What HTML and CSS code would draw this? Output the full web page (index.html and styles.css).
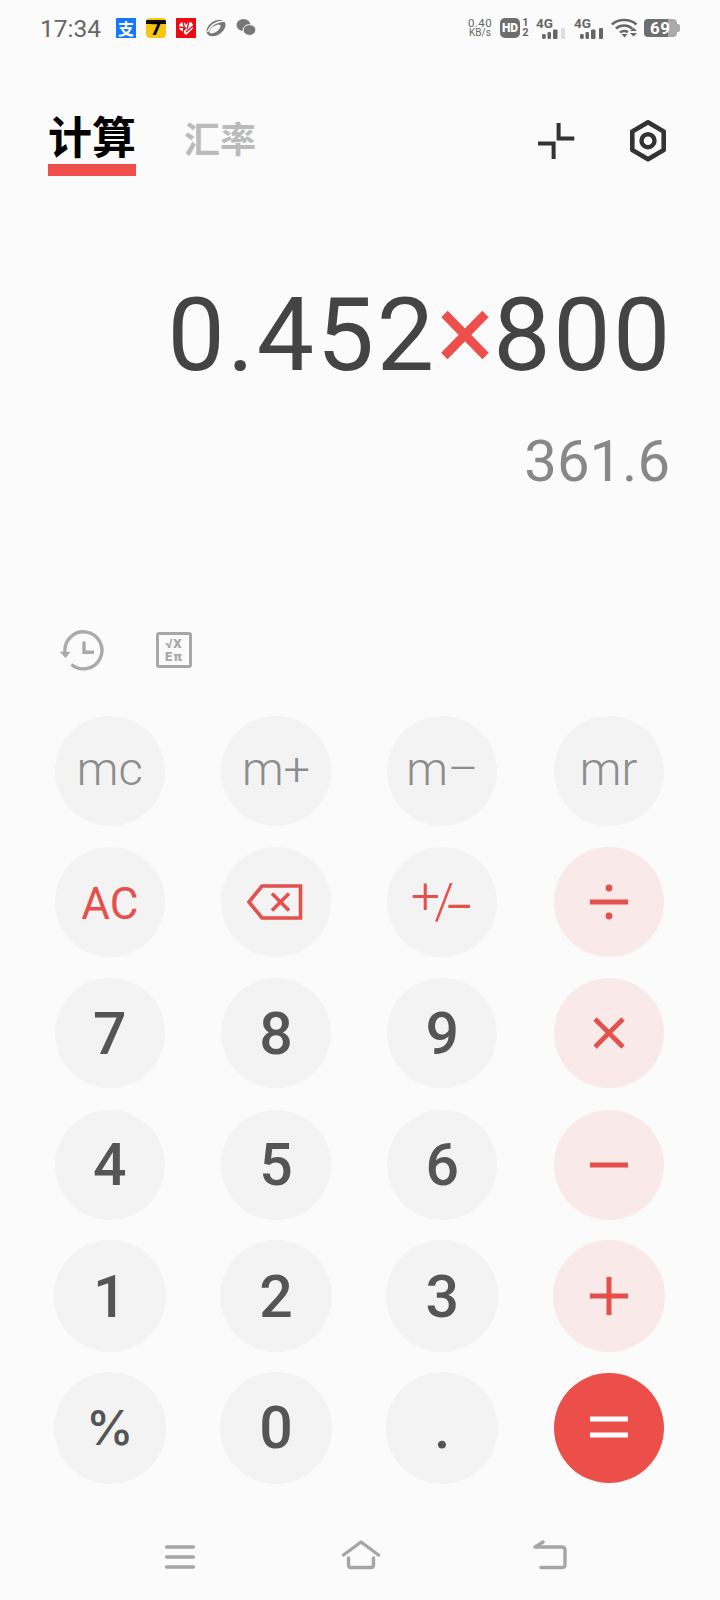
FILE: index.html
```html
<!DOCTYPE html>
<html lang="zh">
<head>
    <meta charset="utf-8">
    <title>计算器</title>
    <link rel="stylesheet" href="styles.css">
</head>
<body>
    <div id="phone">
        <div class="status-bar">
            <span class="time">17:34</span>
            <div class="notify-icons">
                <span class="app app-alipay">支</span>
                <span class="app app-seven">7</span>
                <svg class="app" viewBox="0 0 20 20">
                    <rect width="20" height="20" fill="#ee0a12"/>
                    <path d="M10 17 L3.5 11 C1.5 6 6 2.5 9 5 L10 7 L12 4.5 C15 2.5 18.5 6 16.5 11 Z" fill="#fff"/>
                    <path d="M7 4 L9 12 M13 4 L11 11 M3 9 L10 10 M17 8 L10 14 M8 10 L7 15" stroke="#ee0a12" stroke-width="1.3"/>
                </svg>
                <svg class="app" viewBox="0 0 20 20">
                    <ellipse cx="10" cy="10" rx="10.5" ry="7" transform="rotate(-35 10 10)" fill="#777"/>
                    <path d="M1.5 14 C5 6 11 3.5 18 3" stroke="#fbfbfb" stroke-width="1.6" fill="none"/>
                    <ellipse cx="9" cy="11" rx="6.5" ry="3" transform="rotate(-35 9 11)" fill="#fbfbfb"/>
                </svg>
                <svg class="app" viewBox="0 0 20 20">
                    <ellipse cx="7.5" cy="7" rx="7" ry="6" fill="#777"/>
                    <ellipse cx="13.5" cy="12" rx="6.4" ry="5.4" fill="#777" stroke="#fbfbfb" stroke-width="1"/>
                </svg>
            </div>
            <div class="sys-icons">
                <div class="speed"><span>0.40</span><span class="speed-unit">KB/s</span></div>
                <span class="hd">HD</span>
                <div class="sim-nums"><span>1</span><span>2</span></div>
                <div class="net">
                    <span class="net-label">4G</span>
                    <svg class="bars" viewBox="0 0 24 11">
                        <rect x="0" y="6" width="3.8" height="5" rx="1.4" fill="#666"/>
                        <rect x="5.5" y="4" width="3.5" height="7" rx="1.2" fill="#666"/>
                        <rect x="11" y="1.5" width="4.5" height="9.5" rx="1" fill="#666"/>
                        <rect x="19" y="0" width="4" height="11" fill="#ddd"/>
                    </svg>
                </div>
                <div class="net">
                    <span class="net-label">4G</span>
                    <svg class="bars" viewBox="0 0 24 11">
                        <rect x="0" y="6" width="3.8" height="5" rx="1.4" fill="#666"/>
                        <rect x="5.5" y="4" width="3.5" height="7" rx="1.2" fill="#666"/>
                        <rect x="11" y="1.5" width="4.5" height="9.5" rx="1" fill="#666"/>
                        <rect x="19" y="0" width="4" height="11" rx="1" fill="#666"/>
                    </svg>
                </div>
                <svg class="wifi" viewBox="0 0 27 20" fill="none" stroke="#666" stroke-width="2.6">
                    <path d="M1 6.5 C7 0.5 19 0.5 25.5 6.5"/>
                    <path d="M5 10.5 C9 6.5 17 6.5 21 10.5"/>
                    <path d="M9 14.5 C11.5 12.5 14 12.5 17 14"/>
                    <path d="M10.5 16 H16.5 L13.5 19.5 Z" fill="#666" stroke="none"/>
                    <path d="M22.5 9.5 L26 13 H19 Z M19 15 H26 L22.5 18.5 Z" fill="#666" stroke="none"/>
                </svg>
                <div class="battery">
                    <span class="battery-level">69</span>
                    <span class="battery-nub"></span>
                </div>
            </div>
        </div>

        <div class="top-bar">
            <div class="tabs">
                <div class="tab tab-active">计算</div>
                <div class="tab">汇率</div>
            </div>
            <div class="top-actions">
                <svg class="collapse-icon" viewBox="0 0 38 38" fill="none" stroke="#333" stroke-width="4">
                    <path d="M21.6 1 V16.6 H37.3"/>
                    <path d="M1 21.4 H16.6 V37"/>
                </svg>
                <svg class="settings-icon" viewBox="0 0 40 44" fill="none" stroke="#333">
                    <path d="M19 4.3 L34.7 13.5 V32 L19 41.2 L3.3 32 V13.5 Z" stroke-width="4.6" stroke-linejoin="round"/>
                    <circle cx="19" cy="22.7" r="6.5" stroke-width="4.4"/>
                </svg>
            </div>
        </div>

        <div class="display">
            <div class="expression">0.452<span class="times">×</span>800</div>
            <div class="result">361.6</div>
        </div>

        <div class="tools">
            <svg class="history-icon" viewBox="0 0 46 44" fill="none" stroke="#aaa" stroke-width="3.4">
                <path d="M6 22 A18.5 18.5 0 1 1 12.5 34.5"/>
                <path d="M25 11.5 V22.3 H35"/>
                <path d="M0.5 21.7 H11.5 L6.6 28 Z" fill="#aaa" stroke="none"/>
            </svg>
            <div class="formula-icon">
                <span>√X</span>
                <span>Eπ</span>
            </div>
        </div>

        <div class="keypad">
            <div class="key"><span class="key-bg mem">mc</span></div>
            <div class="key"><span class="key-bg mem">m+</span></div>
            <div class="key"><span class="key-bg mem">m–</span></div>
            <div class="key"><span class="key-bg mem">mr</span></div>

            <div class="key"><span class="key-bg fn ac">AC</span></div>
            <div class="key"><span class="key-bg">
                <svg class="icon-back" viewBox="0 0 58 38" fill="none" stroke="#e4504b" stroke-width="3.6">
                    <path d="M53.5 3 H15 L2 19 L15 35 H53.5 Z"/>
                    <path d="M25 10.5 L42 27.5 M42 10.5 L25 27.5"/>
                </svg>
            </span></div>
            <div class="key"><span class="key-bg fn sign"><span class="sign-plus">+</span><span class="sign-slash">/</span><span class="sign-minus">–</span></span></div>
            <div class="key"><span class="key-bg op">
                <svg class="icon-op" viewBox="0 0 38 38" fill="#e4504b">
                    <circle cx="19" cy="5" r="3.4"/>
                    <rect x="0" y="16.5" width="38" height="5"/>
                    <circle cx="19" cy="33" r="3.4"/>
                </svg>
            </span></div>

            <div class="key"><span class="key-bg num">7</span></div>
            <div class="key"><span class="key-bg num">8</span></div>
            <div class="key"><span class="key-bg num">9</span></div>
            <div class="key"><span class="key-bg op">
                <svg class="icon-op" viewBox="0 0 38 38" stroke="#e4504b" stroke-width="4.6">
                    <path d="M5 5 L33 33 M33 5 L5 33"/>
                </svg>
            </span></div>

            <div class="key"><span class="key-bg num">4</span></div>
            <div class="key"><span class="key-bg num">5</span></div>
            <div class="key"><span class="key-bg num">6</span></div>
            <div class="key"><span class="key-bg op">
                <svg class="icon-op" viewBox="0 0 38 38" fill="#e4504b">
                    <rect x="0" y="16.5" width="38" height="5"/>
                </svg>
            </span></div>

            <div class="key"><span class="key-bg big num">1</span></div>
            <div class="key"><span class="key-bg big num">2</span></div>
            <div class="key"><span class="key-bg big num">3</span></div>
            <div class="key"><span class="key-bg big op">
                <svg class="icon-op" viewBox="0 0 38 38" fill="#e4504b">
                    <rect x="0" y="16.5" width="38" height="5"/>
                    <rect x="16.5" y="0" width="5" height="38"/>
                </svg>
            </span></div>

            <div class="key"><span class="key-bg big num percent">%</span></div>
            <div class="key"><span class="key-bg big num">0</span></div>
            <div class="key"><span class="key-bg big num">.</span></div>
            <div class="key"><span class="key-bg equals">
                <svg class="icon-op" viewBox="0 0 38 38" fill="#fff">
                    <rect x="0" y="7.5" width="38" height="5"/>
                    <rect x="0" y="23.5" width="38" height="5"/>
                </svg>
            </span></div>
        </div>

        <div class="nav-bar">
            <svg class="nav-menu" viewBox="0 0 32 24" fill="none" stroke="#a6a6a6" stroke-width="3.4" stroke-linecap="round">
                <path d="M2.5 2 H29.5 M2.5 12 H29.5 M2.5 22 H29.5"/>
            </svg>
            <svg class="nav-home" viewBox="0 0 40 30" fill="none" stroke="#a6a6a6" stroke-width="3.4" stroke-linecap="round" stroke-linejoin="round">
                <path d="M2.5 15 L20 2 L37.5 15"/>
                <path d="M7.5 18 V25 Q7.5 27.5 10 27.5 H30 Q32.5 27.5 32.5 25 V18"/>
            </svg>
            <svg class="nav-back" viewBox="0 0 34 30" fill="none" stroke="#a6a6a6" stroke-width="3.4" stroke-linecap="round" stroke-linejoin="round">
                <path d="M10 2 L2 7 H29 Q32 7 32 10 V25 Q32 27.5 29 27.5 H8"/>
            </svg>
        </div>
    </div>
</body>
</html>
```

FILE: styles.css
```css
* {
    box-sizing: border-box;
}
body {
    margin: 0;
    background-color: #fbfbfb;
    font-family: Roboto, "Noto Sans CJK SC", sans-serif;
}
#phone {
    width: 720px;
    height: 1600px;
    display: flex;
    flex-direction: column;
    overflow: hidden;
}

/* status bar */
.status-bar {
    height: 56px;
    padding: 0 40px;
    display: flex;
    align-items: center;
    color: #666;
}
.time {
    width: 76px;
    font-size: 24.5px;
}
.notify-icons {
    display: flex;
    gap: 10px;
}
.app {
    width: 20px;
    height: 20px;
    display: flex;
    align-items: center;
    justify-content: center;
    font-weight: 700;
    line-height: 1;
}
.app-alipay {
    background-color: #1677ff;
    color: #fff;
    font-size: 16px;
    font-family: "Noto Sans CJK SC", sans-serif;
}
.app-seven {
    padding-top: 2px;
    border-radius: 4px;
    background: linear-gradient(#f7c613 2px, #111 2px, #111 6px, #f7c613 6px);
    color: #000;
    font-size: 18px;
    line-height: 18px;
    font-weight: 900;
}
.sys-icons {
    margin-left: auto;
    display: flex;
    align-items: center;
}
.speed {
    width: 30px;
    display: flex;
    flex-direction: column;
    align-items: center;
    font-size: 11.5px;
    line-height: 10px;
    margin-right: 5px;
    letter-spacing: 0.4px;
}
.speed-unit {
    font-size: 10px;
    letter-spacing: 0;
}
.hd {
    width: 20px;
    height: 20px;
    background-color: #6e6e6e;
    border-radius: 5px;
    color: #fff;
    font-size: 12px;
    font-weight: 900;
    line-height: 20px;
    text-align: center;
}
.sim-nums {
    width: 9px;
    margin-left: 1px;
    display: flex;
    flex-direction: column;
    font-size: 11px;
    font-weight: 700;
    line-height: 10px;
    text-align: center;
}
.net {
    width: 30px;
    margin-left: 6px;
    margin-right: 2px;
    display: flex;
    flex-direction: column;
}
.net-label {
    font-size: 13.5px;
    font-weight: 700;
    line-height: 10px;
}
.bars {
    width: 24px;
    height: 11px;
    margin-left: 6px;
}
.wifi {
    width: 27px;
    height: 20px;
    margin-left: 5px;
}
.battery {
    width: 36px;
    margin-left: 6px;
    display: flex;
    align-items: center;
    color: #fff;
    font-weight: 700;
}
.battery-level {
    width: 33px;
    height: 18px;
    border-radius: 4px;
    background: linear-gradient(to right, #6e6e6e 74%, #aaa 74%);
    font-size: 17px;
    line-height: 18px;
    letter-spacing: 0.5px;
    padding-left: 6px;
}
.battery-nub {
    width: 3px;
    height: 8px;
    border-radius: 0 2px 2px 0;
    background-color: #aaa;
}

/* top tabs */
.top-bar {
    height: 134px;
    padding: 52px 51px 0 48px;
    display: flex;
    align-items: flex-start;
    justify-content: space-between;
}
.tabs {
    display: flex;
    align-items: flex-end;
    gap: 48px;
}
.tab {
    font-size: 36px;
    font-weight: 700;
    color: #bbb;
    line-height: 50px;
    padding-bottom: 10px;
}
.tab-active {
    width: 88px;
    font-size: 44px;
    color: #000;
    text-align: center;
    padding: 6px 0 0;
    line-height: 50px;
    border-bottom: 12px solid #ee4f4b;
    white-space: nowrap;
}
.top-actions {
    margin-top: 10px;
    display: flex;
    align-items: center;
    gap: 54px;
}
.collapse-icon {
    width: 38px;
    height: 38px;
    margin-top: 2px;
}
.settings-icon {
    width: 40px;
    height: 44px;
}

/* expression and result */
.display {
    height: 440px;
    padding: 85px 0 0 0;
    text-align: right;
}
.expression {
    padding-right: 47px;
    font-size: 102px;
    line-height: 120px;
    letter-spacing: 2.6px;
    color: #444;
}
.times {
    color: #ee4f4b;
    font-size: 108px;
    line-height: 0;
    letter-spacing: -1px;
}
.result {
    padding-right: 50px;
    margin-top: 31px;
    font-size: 58px;
    line-height: 70px;
    color: #888;
}

/* history row */
.tools {
    height: 75px;
    padding-left: 59px;
    display: flex;
    align-items: flex-start;
    gap: 51px;
}
.history-icon {
    width: 46px;
    height: 44px;
}
.formula-icon {
    width: 36px;
    height: 36px;
    margin-top: 2px;
    border: 3.5px solid #a8a8a8;
    border-radius: 3px;
    color: #a8a8a8;
    font-size: 13px;
    font-weight: 900;
    line-height: 13px;
    letter-spacing: 1px;
    text-align: center;
    display: flex;
    flex-direction: column;
    justify-content: center;
}

/* keypad */
.keypad {
    margin-left: 26.7px;
    width: 665px;
    display: grid;
    grid-template-columns: repeat(4, 1fr);
    grid-auto-rows: 131.4px;
}
.key {
    display: flex;
    align-items: center;
    justify-content: center;
}
.key-bg {
    width: 110px;
    height: 110px;
    border-radius: 50%;
    background-color: #f3f3f3;
    display: flex;
    align-items: center;
    justify-content: center;
}
.key-bg.big {
    width: 112px;
    height: 112px;
}
.mem {
    padding-bottom: 4px;
    font-size: 47px;
    font-weight: 350;
    color: #8c8c8c;
}
.fn {
    font-size: 44px;
    color: #e4504b;
}
.ac {
    padding-top: 3px;
}
.num {
    font-size: 59px;
    font-weight: 550;
    color: #555;
}
.percent {
    font-family: Inter, sans-serif;
    font-size: 48px;
    font-weight: 500;
}
.op {
    background-color: #f9e9e9;
}
.equals {
    background-color: #ec4f4a;
}
.icon-op {
    width: 38px;
    height: 38px;
}
.icon-back {
    width: 58px;
    height: 38px;
}
.sign-plus {
    font-size: 52px;
    font-weight: 300;
    letter-spacing: -6px;
    margin-bottom: 11px;
}
.sign-slash {
    font-size: 50px;
    font-weight: 300;
    letter-spacing: -9px;
}
.sign-minus {
    font-size: 44px;
    padding-top: 10px;
}

/* navigation */
.nav-bar {
    height: 106px;
    padding: 47px 0 0 164px;
    display: flex;
    align-items: flex-start;
}
.nav-menu {
    width: 32px;
    height: 24px;
    margin-top: 5px;
}
.nav-home {
    width: 40px;
    height: 30px;
    margin-left: 145px;
}
.nav-back {
    width: 34px;
    height: 30px;
    margin-left: 152px;
}
```
